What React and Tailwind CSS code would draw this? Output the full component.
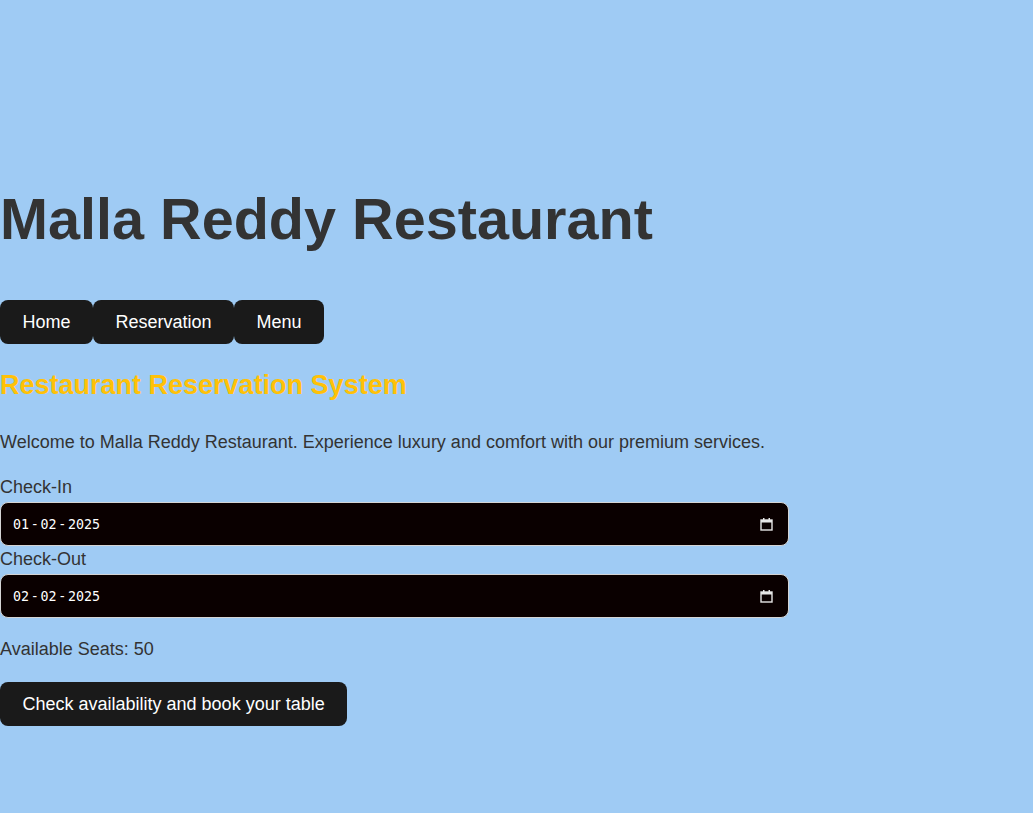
function DateField({ day, month, year }) {
  return (
    <div className="flex items-center justify-between w-[789px] h-[44px] mt-[4px] pl-[11px] pr-[15px] bg-[#0a0000] text-white border border-[#d4d4d4] rounded-lg">
      <div
        className="flex items-center text-[13.33px] leading-[16px] mt-[1px]"
        style={{ fontFamily: '"DejaVu Sans Mono", monospace' }}
      >
        <span className="px-[1px]">{day}</span>
        <span className="mx-[0.7px]">-</span>
        <span className="px-[1px]">{month}</span>
        <span className="mx-[0.7px]">-</span>
        <span className="px-[1px]">{year}</span>
      </div>
      <svg width="13" height="14" viewBox="0 0 13 14" fill="none">
        <rect x="1" y="3" width="11" height="10" stroke="#e6e6e6" strokeWidth="1.4" />
        <rect x="1" y="3" width="11" height="2.5" fill="#e6e6e6" />
        <rect x="3" y="1" width="1.5" height="2.5" fill="#e6e6e6" />
        <rect x="8.5" y="1" width="1.5" height="2.5" fill="#e6e6e6" />
      </svg>
    </div>
  );
}

export default function App() {
  const navItems = ["Home", "Reservation", "Menu"];

  return (
    <div
      className="min-h-screen bg-[#9fcbf4] text-[#333333] pt-[186px]"
      style={{ fontFamily: '"Liberation Sans", Arial, sans-serif' }}
    >
      <h1 className="text-[57.6px] leading-[66px] font-bold">Malla Reddy Restaurant</h1>

      <nav className="flex mt-[48px]">
        {navItems.map((item) => (
          <a
            key={item}
            href="#"
            className="bg-[#1a1a1a] text-white text-[18px] leading-[20px] px-[22.5px] py-[12px] rounded-lg"
          >
            {item}
          </a>
        ))}
      </nav>

      <h2 className="text-[27px] leading-[31px] font-bold text-[#ffc107] mt-[26px]">
        Restaurant Reservation System
      </h2>

      <p className="text-[18px] leading-[21px] mt-[31px]">
        Welcome to Malla Reddy Restaurant. Experience luxury and comfort with our premium services.
      </p>

      <form className="mt-[24px]" onSubmit={(e) => e.preventDefault()}>
        <label className="block text-[18px] leading-[21px]">Check-In</label>
        <DateField day="01" month="02" year="2025" />
        <label className="block text-[18px] leading-[21px] mt-[3px]">Check-Out</label>
        <DateField day="02" month="02" year="2025" />

        <p className="text-[18px] leading-[21px] mt-[21px]">Available Seats: 50</p>

        <button
          type="submit"
          className="mt-[22px] bg-[#1a1a1a] text-white text-[18px] leading-[20px] px-[22.5px] py-[12px] rounded-lg"
        >
          Check availability and book your table
        </button>
      </form>
    </div>
  );
}
